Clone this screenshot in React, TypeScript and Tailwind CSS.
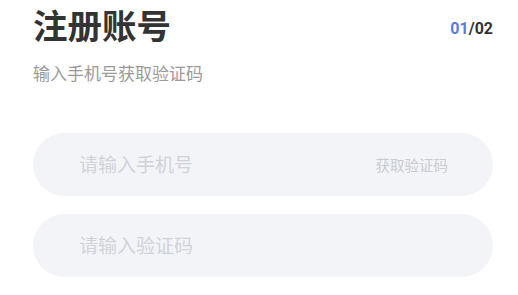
import * as React from "react"

const font = { fontFamily: '"Noto Sans CJK SC", "Noto Sans", sans-serif' }

function Field({ placeholder, action }: { placeholder: string; action?: string }) {
  return (
    <div className="flex h-[63px] items-center rounded-full bg-[#f3f4f8] pl-[46px] pr-[45px]">
      <span className="flex-1 text-[19px] text-[#d0d2da]">{placeholder}</span>
      {action ? <span className="text-[14.5px] text-[#c9cbd3]">{action}</span> : null}
    </div>
  )
}

export default function App() {
  return (
    <div className="h-[295px] w-[518px] bg-white pl-[33px] pr-[25px]" style={font}>
      <div className="flex items-start justify-between">
        <h1 className="text-[34.5px] font-bold leading-[48px] text-[#333333]">注册账号</h1>
        <div className="mt-[17px] font-['Roboto'] text-[16px] font-bold text-[#333333]">
          <span className="text-[#5b7be0]">01</span>/02
        </div>
      </div>
      <p className="mt-[13px] text-[17px] leading-[24px] text-[#9a9a9a]">输入手机号获取验证码</p>
      <div className="mt-[48px] flex flex-col gap-[18px]">
        <Field placeholder="请输入手机号" action="获取验证码" />
        <Field placeholder="请输入验证码" />
      </div>
    </div>
  )
}
